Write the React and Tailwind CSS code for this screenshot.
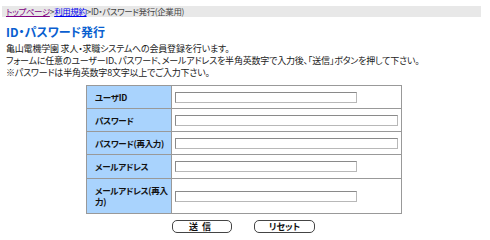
const rows = [
  { label: 'ユーザID', wide: false, h: 'h-[23px]' },
  { label: 'パスワード', wide: true, h: 'h-[23px]' },
  { label: 'パスワード(再入力)', wide: true, h: 'h-[23px]' },
  { label: 'メールアドレス', wide: false, h: 'h-[24px]' },
  { label: 'メールアドレス(再入力)', wide: false, h: 'h-[35px]' },
];

function Field({ wide }) {
  return (
    <div
      className={`h-[11px] border border-[#b8b8b8] border-t-[#8a8a8a] border-l-[#8a8a8a] bg-white ${
        wide ? 'w-[223px]' : 'w-[182px]'
      }`}
    />
  );
}

export default function App() {
  return (
    <div className="w-[490px] h-[240px] bg-white text-[#222] font-['Noto_Sans_CJK_JP',sans-serif] [font-feature-settings:'palt'] overflow-hidden">
      <div className="pt-[6px] pl-[2px] pr-[9px]">
        <div className="h-[11px] bg-[#e8e8e8] pl-[4px] flex items-center text-[8.5px] leading-[11px] tracking-[-0.4px]">
          <a className="text-[#800080] underline">トップページ</a>
          <span className="text-[#444]">&gt;</span>
          <a className="text-[#0000ee] underline">利用規約</a>
          <span className="text-[#444]">&gt;ID・パスワード発行(企業用)</span>
        </div>
      </div>

      <div className="pl-[6px] pt-[8px]">
        <h1 className="text-[12px] leading-[14px] font-bold text-[#0a5fd0]">ID・パスワード発行</h1>
        <div className="mt-[4px] text-[9px] leading-[12px] text-[#222] tracking-[-0.2px]">
          <p>亀山電機学園 求人・求職システムへの会員登録を行います。</p>
          <p>フォームに任意のユーザーID、パスワード、メールアドレスを半角英数字で入力後、「送信」ボタンを押して下さい。</p>
          <p>※パスワードは半角英数字8文字以上でご入力下さい。</p>
        </div>
      </div>

      <div className="pl-[86px] pt-[6px]">
        <table className="border-collapse border border-[#999]">
          <tbody>
            {rows.map((r) => (
              <tr key={r.label} className={r.h}>
                <td className="w-[85px] border border-[#999] bg-[#a9d3fd] pl-[8px] pr-0 text-[8.5px] leading-[11px] font-bold text-[#111] tracking-[-0.3px] align-middle">
                  {r.label}
                </td>
                <td className="w-[230px] border border-[#999] bg-white pl-[3px] align-middle">
                  <Field wide={r.wide} />
                </td>
              </tr>
            ))}
          </tbody>
        </table>
      </div>

      <div className="flex pl-[172px] gap-[22px] pt-[6px]">
        <button className="w-[60px] h-[13px] rounded-[5px] border border-[#444] bg-white text-[9px] leading-[11px] font-bold text-[#111] tracking-[4px]">
          送信
        </button>
        <button className="w-[61px] h-[13px] rounded-[5px] border border-[#444] bg-white text-[9px] leading-[11px] font-bold text-[#111]">
          リセット
        </button>
      </div>
    </div>
  );
}
